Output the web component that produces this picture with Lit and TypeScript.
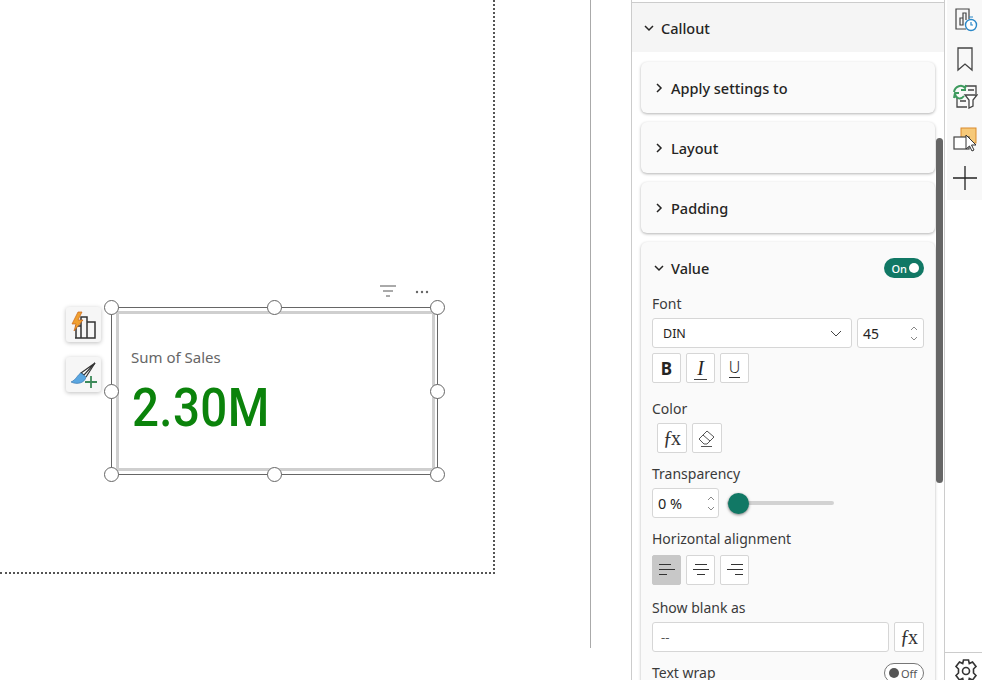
import { LitElement, html, css, svg } from "lit";
import { customElement } from "lit/decorators.js";

const chevR = html`<svg class="chev" viewBox="0 0 10 10"><path d="M3 1 L7 5 L3 9" fill="none" stroke="#252423" stroke-width="1.5"/></svg>`;
const chevD = html`<svg class="chev" viewBox="0 0 10 10"><path d="M1 3 L5 7 L9 3" fill="none" stroke="#252423" stroke-width="1.5"/></svg>`;
const fx = html`<span class="fx">ƒx</span>`;
const alignIcon = (rows: number[][]) => html`<svg class="i18" viewBox="0 0 20 14">${rows.map((r, i) => svg`<line x1=${r[0]} x2=${r[1]} y1=${1.5 + i * 5} y2=${1.5 + i * 5} stroke="#333" stroke-width="1"/>`)}</svg>`;
const spin = html`<span class="spin"><svg viewBox="0 0 8 5"><path d="M1 4 L4 1 L7 4" fill="none" stroke="#888"/></svg><svg viewBox="0 0 8 5"><path d="M1 1 L4 4 L7 1" fill="none" stroke="#888"/></svg></span>`;

const handles = [
  [0, 0], [50, 0], [100, 0],
  [0, 50], [100, 50],
  [0, 100], [50, 100], [100, 100],
];

@customElement("app-root")
export class AppRoot extends LitElement {
  static styles = css`
    :host { display: block; width: 982px; height: 680px; overflow: hidden; background: #fff; font-family: "Noto Sans", "Open Sans", sans-serif; color: #252423; font-size: 14px; }
    .app { display: flex; height: 680px; }
    svg { display: block; }

    .canvas { width: 590px; height: 648px; border-right: 1px solid #aaa; flex: none; }
    .page { position: relative; width: 495px; height: 574px; box-sizing: border-box; border-right: 2px dotted #555; border-bottom: 2px dotted #555; }
    .visual { position: absolute; left: 111px; top: 307px; width: 327px; height: 168px; border: 1px solid #666; box-sizing: border-box; }
    .frame { position: absolute; inset: 3px 2px 3px 4px; border: 3px solid #cfcfcf; display: flex; flex-direction: column; padding: 33px 0 0 12px; }
    .vtitle { font-size: 15px; line-height: 20px; color: #666; }
    .vvalue { font-family: Roboto, sans-serif; font-weight: 500; font-size: 54px; line-height: 60px; color: #0b830b; margin-top: 11px; transform: scaleX(.88); transform-origin: left; letter-spacing: .4px; margin-left: 1px; }
    .handle { position: absolute; width: 15px; height: 15px; margin: -8px 0 0 -8px; border-radius: 50%; background: #fff; border: 1px solid #666; box-sizing: border-box; }
    .vfilter { position: absolute; left: 380px; top: 285px; width: 16px; height: 14px; }
    .vdots { position: absolute; left: 415px; top: 290px; width: 15px; height: 4px; }
    .sidebtn { position: absolute; left: 66px; width: 35px; height: 35px; background: #f6f6f6; border-radius: 3px; box-shadow: 0 1px 4px rgba(0,0,0,.25); display: flex; align-items: center; justify-content: center; }
    .sb1 { top: 307px; }
    .sb2 { top: 357px; }

    .gap { width: 40px; flex: none; }

    .panel { position: relative; width: 314px; flex: none; border-left: 1px solid #ccc; border-right: 1px solid #ccc; box-sizing: border-box; height: 680px; overflow: hidden; padding-top: 2px; }
    .phead { height: 50px; background: #f5f5f5; border-top: 1px solid #ccc; box-sizing: border-box; display: flex; align-items: center; padding-left: 12px; gap: 7px; font-weight: 500; font-size: 14.5px; }
    .cards { padding: 10px 0 0 9px; display: flex; flex-direction: column; gap: 9px; }
    .card { width: 294px; background: #fafafa; border-radius: 6px; box-shadow: 0 1px 3px rgba(0,0,0,.3); box-sizing: border-box; }
    .row { height: 51px; display: flex; align-items: center; padding-left: 13px; gap: 7px; font-weight: 500; font-size: 14.5px; }
    .chev { width: 10px; height: 10px; flex: none; }
    .value { padding: 0 11px; height: 500px; }
    .vhead { height: 52px; display: flex; align-items: center; gap: 7px; padding-left: 2px; font-weight: 500; font-size: 14.5px; }
    .vhead .sp, .wrap .sp { flex: 1; }
    .toggle { width: 40px; height: 20px; border-radius: 10px; background: #117865; color: #fff; font-size: 11px; display: flex; align-items: center; justify-content: flex-end; gap: 2px; padding-right: 5px; box-sizing: border-box; }
    .knob { width: 10px; height: 10px; border-radius: 50%; background: #fff; }
    .toggle.off { background: #fff; border: 1px solid #777; color: #555; padding: 0 0 0 4px; justify-content: flex-start; }
    .toggle.off .knob { background: #555; }
    .lbl { font-size: 14px; line-height: 20px; color: #3a3a3a; }
    .flex { display: flex; }
    .box { height: 30px; background: #fff; border: 1px solid #d6d6d6; border-radius: 3px; box-sizing: border-box; display: flex; align-items: center; font-size: 13px; }
    .sel { width: 200px; padding: 0 10px; justify-content: space-between; font-size: 12.5px; }
    .num { width: 67px; margin-left: 5px; padding: 0 5px 0 5px; justify-content: space-between; font-size: 14px; }
    .pct { width: 67px; padding: 0 3px 0 5px; justify-content: space-between; font-size: 14.5px; }
    .spin { display: flex; flex-direction: column; gap: 5px; }
    .spin svg { width: 8px; height: 5px; }
    .btns { display: flex; gap: 5px; }
    .btn { width: 30px; height: 30px; background: #fff; border: 1px solid #d6d6d6; border-radius: 2px; box-sizing: border-box; display: flex; align-items: center; justify-content: center; }
    .btn.sq { width: 29px; }
    .btn.on { background: #c8c8c8; border-color: #c8c8c8; }
    .b { font-weight: 700; font-size: 17px; }
    .it { font-family: "Liberation Serif", serif; font-style: italic; font-size: 20px; line-height: 22px; border-bottom: 1px solid #444; padding: 0 3px; }
    .un { font-size: 16px; font-weight: 300; line-height: 19px; border-bottom: 1px solid #333; }
    .fx { font-family: "Liberation Serif", serif; font-size: 20px; letter-spacing: -2px; color: #333; margin-left: -2px; }
    .i18 { width: 20px; height: 14px; }
    .slider { position: relative; margin-left: 8px; width: 107px; height: 30px; display: flex; align-items: center; }
    .track { width: 100%; height: 4px; background: #d2d2d2; border-radius: 2px; }
    .thumb { position: absolute; left: 0.5px; top: 4.5px; width: 21px; height: 21px; border-radius: 50%; background: #117865; box-shadow: 0 1px 3px rgba(0,0,0,.5); }
    .blank { width: 237px; padding: 0 8px; color: #555; }
    .wrap { display: flex; align-items: center; }

    .scroll { position: absolute; left: 304px; top: 138px; width: 7px; height: 345px; background: #666; border-radius: 4px; }

    .rail { flex: 1; height: 680px; display: flex; flex-direction: column; padding-left: 2px; }
    .rtop { height: 200px; background: #f8f8f8; display: flex; flex-direction: column; align-items: center; }
    .rtop svg { width: 26px; height: 26px; margin-top: 12px; margin-bottom: 2px; }
    .rsp { flex: 1; }
    .rbot { height: 28px; margin-left: -2px; border-top: 1px solid #ccc; display: flex; justify-content: center; padding: 5px 0 0 4px; box-sizing: border-box; }
  `;

  render() {
    return html`<div class="app">
      <div class="canvas">
        <div class="page">
          <svg class="vfilter" viewBox="0 0 16 14"><path d="M0 1H16M3 6H13M6 11H10" stroke="#555" fill="none"/></svg>
          <svg class="vdots" viewBox="0 0 15 4"><circle cx="2" cy="2" r="1.2" fill="#666"/><circle cx="7" cy="2" r="1.2" fill="#666"/><circle cx="12" cy="2" r="1.2" fill="#666"/></svg>
          <div class="sidebtn sb1">
            <svg width="28" height="28" viewBox="0 0 28 28"><path d="M6 27V15H11V27M11 27V6H17V27M17 27V11H25V27H5" fill="none" stroke="#333" stroke-width="1.5"/><path d="M8 1L2 13H6L4 20L13 9H8L12 1Z" fill="#f0a030" stroke="#c8641a" stroke-width=".7"/></svg>
          </div>
          <div class="sidebtn sb2">
            <svg width="28" height="28" viewBox="0 0 28 28"><path d="M25 2L14 14L11 12Z" fill="#fff" stroke="#333" stroke-width="1.2"/><path d="M25 2L16 16" stroke="#333" stroke-width="1.2"/><path d="M11 12C8 13 6 19 1 21C7 24 15 22 16 16Z" fill="#5aa6e0" stroke="#2d6ea8" stroke-width=".6"/><path d="M21 15V27M15 21H27" stroke="#3d8a5a" stroke-width="1.8"/></svg>
          </div>
          <div class="visual">
            <div class="frame">
              <div class="vtitle">Sum of Sales</div>
              <div class="vvalue">2.30M</div>
            </div>
            ${handles.map(([x, y]) => html`<div class="handle" style="left:calc(${x}% + ${x / 100}px);top:calc(${y}% + ${y / 100}px)"></div>`)}
          </div>
        </div>
      </div>
      <div class="gap"></div>
      <div class="panel">
        <div class="phead">${chevD}<span>Callout</span></div>
        <div class="cards">
          <div class="card row">${chevR}<span>Apply settings to</span></div>
          <div class="card row">${chevR}<span>Layout</span></div>
          <div class="card row">${chevR}<span>Padding</span></div>
          <div class="card value">
            <div class="vhead">${chevD}<span>Value</span><span class="sp"></span><span class="toggle">On<span class="knob"></span></span></div>
            <div class="lbl">Font</div>
            <div class="flex" style="margin-top:4px">
              <div class="box sel"><span>DIN</span><svg class="chev" viewBox="0 0 10 10"><path d="M0 3 L5 8 L10 3" fill="none" stroke="#444"/></svg></div>
              <div class="box num"><span>45</span>${spin}</div>
            </div>
            <div class="btns" style="margin-top:5px">
              <div class="btn sq"><span class="b">B</span></div>
              <div class="btn sq"><span class="it">I</span></div>
              <div class="btn sq"><span class="un">U</span></div>
            </div>
            <div class="lbl" style="margin-top:16px">Color</div>
            <div class="btns" style="margin:4px 0 0 5px">
              <div class="btn">${fx}</div>
              <div class="btn"><svg width="20" height="20" viewBox="0 0 20 20"><path d="M2 11L10 3L17 9L10 16H7Z M6 7L13 13M4 18.5H15" fill="none" stroke="#555" stroke-width="1"/></svg></div>
            </div>
            <div class="lbl" style="margin-top:11px">Transparency</div>
            <div class="flex" style="margin-top:4px">
              <div class="box pct"><span>0 %</span>${spin}</div>
              <div class="slider"><div class="track"></div><div class="thumb"></div></div>
            </div>
            <div class="lbl" style="margin-top:11px">Horizontal alignment</div>
            <div class="btns" style="margin-top:6px">
              <div class="btn sq on">${alignIcon([[2, 14], [2, 18], [2, 10]])}</div>
              <div class="btn sq">${alignIcon([[4, 16], [2, 18], [6, 14]])}</div>
              <div class="btn sq">${alignIcon([[6, 18], [2, 18], [10, 18]])}</div>
            </div>
            <div class="lbl" style="margin-top:13px">Show blank as</div>
            <div class="flex" style="margin-top:4px;gap:5px">
              <div class="box blank">--</div>
              <div class="btn">${fx}</div>
            </div>
            <div class="wrap" style="margin-top:11px"><span class="lbl">Text wrap</span><span class="sp"></span><span class="toggle off"><span class="knob"></span>Off</span></div>
          </div>
        </div>
        <div class="scroll"></div>
      </div>
      <div class="rail">
        <div class="rtop">
          <svg viewBox="0 0 26 26" style="margin-top:7px"><path d="M14 22H4V2H17V12M8 18V11H11V18ZM11 15V6H14V13" fill="none" stroke="#444" stroke-width="1.2"/><circle cx="19" cy="18" r="5.5" fill="#fff" stroke="#2b88c8" stroke-width="1.4"/><path d="M19 15V18H21M17 10H21" stroke="#2b88c8" fill="none" stroke-width="1.2"/></svg>
          <svg viewBox="0 0 26 26" style="margin-top:11px"><path d="M6 2H20V24L13 18L6 24Z" fill="none" stroke="#444" stroke-width="1.3"/></svg>
          <svg viewBox="0 0 26 26" style="margin-top:9px"><path d="M5 15V24H15M8 18H14" fill="none" stroke="#444" stroke-width="1.3"/><path d="M14 3H24V11M16 7H22" fill="none" stroke="#444" stroke-width="1.3"/><path d="M2 9C3 3 10 1 13 5L14 2M14 7H9M12 13C9 17 4 16 3 11M2 15L3 10H7" fill="none" stroke="#3e9a5e" stroke-width="2"/><path d="M13 12H25L21 17V23L17 25V17Z" fill="#fff" stroke="#444" stroke-width="1.3"/></svg>
          <svg viewBox="0 0 26 26" style="margin-top:16px"><rect x="9" y="1" width="15" height="15" fill="#f6c979" stroke="#d98a2c"/><rect x="2" y="10" width="15" height="12" fill="#fff" stroke="#444" stroke-width="1.2"/><path d="M14 8V22L17.5 19L20 24L22 23L19.5 18H24Z" fill="#fff" stroke="#333"/></svg>
          <svg viewBox="0 0 26 26" style="margin-top:10px"><path d="M13 1V25M1 13H25" stroke="#222" stroke-width="1.3"/></svg>
        </div>
        <div class="rsp"></div>
        <div class="rbot">
          <svg width="26" height="26" viewBox="0 0 26 26"><circle cx="13" cy="13" r="3.5" fill="none" stroke="#333" stroke-width="1.6"/><path d="M10.5 2H15.5L16.3 5.5L19.5 4L23 8.5L20.5 11L20.5 15L23 17.5L19.5 22L16.3 20.5L15.5 24H10.5L9.7 20.5L6.5 22L3 17.5L5.5 15V11L3 8.5L6.5 4L9.7 5.5Z" fill="none" stroke="#333" stroke-width="1.6"/></svg>
        </div>
      </div>
    </div>`;
  }
}
